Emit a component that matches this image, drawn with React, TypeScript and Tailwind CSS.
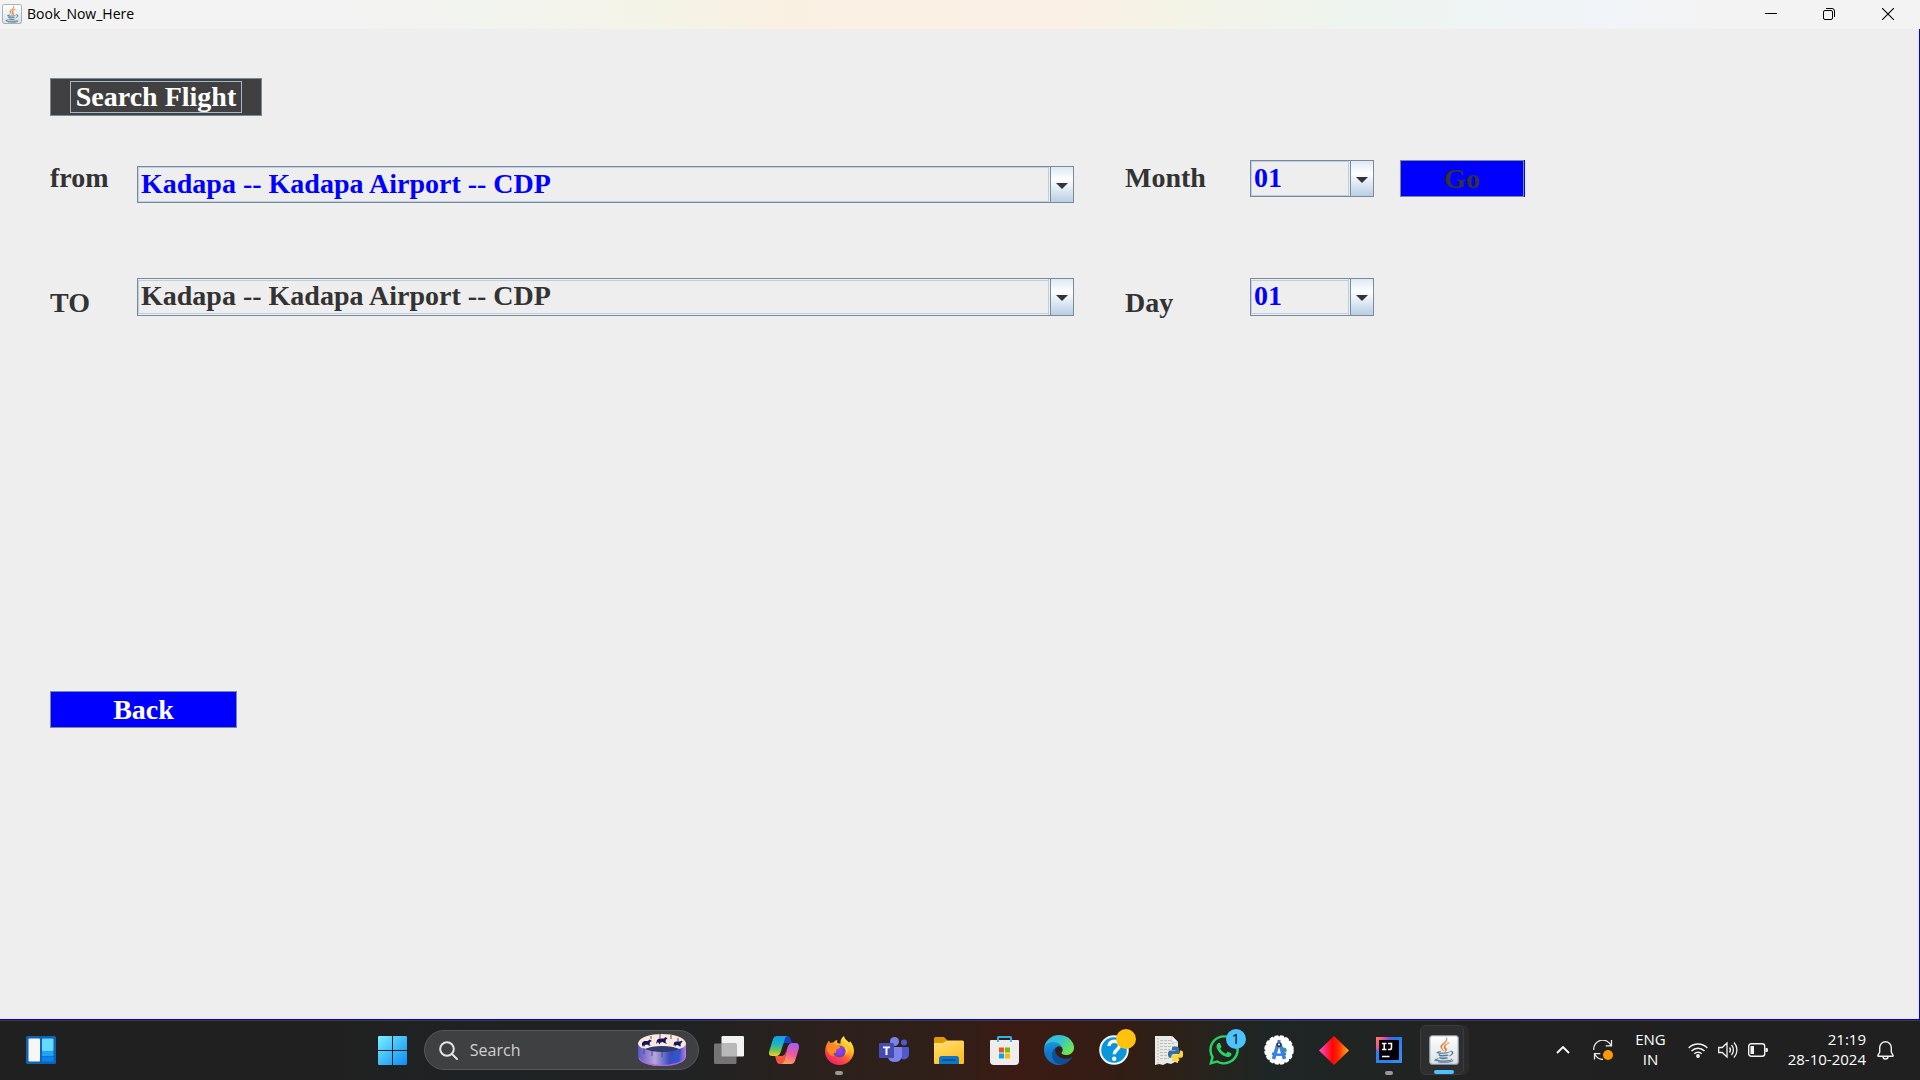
import type { ReactNode } from 'react';
import { FaWhatsapp } from 'react-icons/fa';

const airports = ['Kadapa -- Kadapa Airport -- CDP'];
const months = Array.from({ length: 12 }, (_, i) => String(i + 1).padStart(2, '0'));
const days = Array.from({ length: 31 }, (_, i) => String(i + 1).padStart(2, '0'));

function JavaIcon({ className }: { className: string }) {
  return (
    <svg viewBox="0 0 30 30" className={className} aria-hidden="true">
      <defs>
        <linearGradient id="javaTile" x1="0" y1="0" x2="0" y2="1">
          <stop offset="0" stopColor="#ffffff" />
          <stop offset="1" stopColor="#dcdfe2" />
        </linearGradient>
      </defs>
      <rect x="0.75" y="0.75" width="28.5" height="28.5" rx="2.5" fill="url(#javaTile)" stroke="#8ba3b5" strokeWidth="1.2" />
      <g transform="translate(5.5 2.5) scale(0.049)">
        <path
          fill="#e8762d"
          stroke="#e8762d"
          strokeWidth="8"
          d="M192.34 280.8c-19-42.7-83.1-80.2 0-145.8C296 53.2 242.84 0 242.84 0c21.5 84.5-75.6 110.1-110.7 162.6-23.9 35.9 11.7 74.4 60.2 118.2zM306.94 104.6c.1 0-175.2 43.8-91.5 140.2 24.7 28.4-6.5 54-6.5 54s62.7-32.4 33.9-72.9c-26.9-37.8-47.5-56.6 64.1-121.3z"
        />
        <path
          fill="#4c7896"
          stroke="#4c7896"
          strokeWidth="10"
          d="M277.74 312.9c9.8-6.7 23.4-12.5 23.4-12.5s-38.7 7-77.2 10.2c-47.1 3.9-97.7 4.7-123.1 1.3-60.1-8 33-30.1 33-30.1s-36.1-2.4-80.6 19c-52.5 25.4 130 37 224.5 12.1zM300.84 375.1a12.19 12.19 0 0 1-2 2.6c128.3-33.7 81.1-118.9 19.8-97.3a17.33 17.33 0 0 0-8.2 6.3 70.45 70.45 0 0 1 11-3c31-6.5 75.5 41.5-20.6 91.4zM348 437.4s14.5 11.9-15.9 21.2c-57.9 17.5-240.8 22.8-291.6.7-18.3-7.9 16-19 26.8-21.3 11.2-2.4 17.7-2 17.7-2-20.3-14.3-131.3 28.1-56.4 40.2C232.84 509.4 401 461.3 348 437.4zM124.44 396c-78.7 22 47.9 67.4 148.1 24.5a185.89 185.89 0 0 1-28.2-13.8c-44.7 8.5-65.4 9.1-106 4.5-33.5-3.8-13.9-15.2-13.9-15.2zm179.8 97.2c-78.7 14.8-175.8 13.1-233.3 3.6 0-.1 11.8 9.7 72.4 13.6 92.2 5.9 233.8-3.3 237.1-46.9 0 0-6.4 16.5-76.2 29.7zM260.64 353c-59.2 11.4-93.5 11.1-136.8 6.6-33.5-3.5-11.6-19.7-11.6-19.7-86.8 28.8 48.2 61.4 169.5 25.9a60.37 60.37 0 0 1-21.1-12.8z"
        />
      </g>
    </svg>
  );
}

function TitleBar() {
  return (
    <header className="flex h-[29px] items-center bg-[linear-gradient(90deg,#f3f3f3_0%,#f3f3f3_17%,#f2f4ef_25%,#f4f3e6_35%,#faf0e2_41%,#faf0e6_56%,#f4f3e6_61%,#eef4ee_70%,#eff4f4_76%,#f1f4f8_84%,#f3f3f3_90%)] pb-px pl-0.5">
      <JavaIcon className="size-5" />
      <h1 className="ml-[5px] flex-1 font-['Open_Sans',sans-serif] text-sm text-black">Book_Now_Here</h1>
      <div className="flex h-full">
        <button type="button" aria-label="Minimize" className="flex w-[58px] items-center justify-center">
          <svg viewBox="0 0 12 12" className="size-3" stroke="#000" fill="none">
            <path d="M0 5.5h12" />
          </svg>
        </button>
        <button type="button" aria-label="Restore" className="flex w-[58px] items-center justify-center">
          <svg viewBox="0 0 12 12" className="size-3" stroke="#000" fill="none">
            <rect x="0.5" y="2.5" width="9" height="9" rx="1.5" />
            <path d="M3 .5h6a2.5 2.5 0 0 1 2.5 2.5v6" />
          </svg>
        </button>
        <button type="button" aria-label="Close" className="flex w-[62px] items-center justify-center pr-0.5">
          <svg viewBox="0 0 12 12" className="size-3" stroke="#000" fill="none" strokeWidth="1.1">
            <path d="M0 0l12 12M12 0L0 12" />
          </svg>
        </button>
      </div>
    </header>
  );
}

type ComboProps = { id: string; options: string[]; tone: string; frame: string };

function Combo({ id, options, tone, frame }: ComboProps) {
  return (
    <div className={`relative flex border border-[#7a8a99] ${frame}`}>
      <select
        id={id}
        className={`min-w-0 flex-1 appearance-none border border-[#b8cfe5] bg-transparent pr-8 pb-0.5 pl-0.5 leading-[30px] outline-none ${tone}`}
      >
        {options.map((o) => (
          <option key={o}>{o}</option>
        ))}
      </select>
      <span className="pointer-events-none absolute inset-y-0 right-0 flex w-[23px] items-center justify-center border-l border-[#7a8a99] bg-[linear-gradient(180deg,#dde8f3_0%,#ffffff_35%,#b8cfe5_100%)] shadow-[-1px_0_0_#eeeeee,-2px_0_0_#b8cfe5]">
        <svg viewBox="0 0 12 6" className="mt-0.5 h-1.5 w-3" fill="#333">
          <path d="M0 0h12L6 6z" />
        </svg>
      </span>
    </div>
  );
}

function BookingForm() {
  return (
    <main className="flex-1 border-r border-b border-[#0000e0] bg-[#eeeeee] pt-[49px] pl-[50px] font-['Liberation_Serif',serif] text-[28px] leading-[30px] font-bold text-[#333333]">
      <button type="button" className="flex h-[38px] w-[212px] items-center justify-center border border-[#7a8a99] bg-[#404040] text-white">
        <span className="w-[172px] border border-[#a3b8cc]">Search Flight</span>
      </button>

      <div className="mt-11 grid grid-cols-[87px_937fr_176px_124px_26px_125px_394fr] items-start">
        <label htmlFor="from" className="mt-[3px]">from</label>
        <div className="mt-1.5 grid">
          <Combo id="from" options={airports} tone="text-[#0000ff]" frame="h-[37px]" />
        </div>
        <label htmlFor="month" className="mt-[3px] pl-[51px]">Month</label>
        <Combo id="month" options={months} tone="text-[#0000ff]" frame="h-[37px]" />
        <span />
        <button type="button" className="mr-px h-[37px] border border-[#7a8a99] bg-[#0000ff] shadow-[1px_0_0_#0000ff]">
          Go
        </button>
      </div>

      <div className="mt-[75px] grid grid-cols-[87px_937fr_176px_124px_26px_125px_394fr] items-start">
        <label htmlFor="to" className="mt-2.5">TO</label>
        <Combo id="to" options={airports} tone="text-[#333333]" frame="h-[38px] py-px" />
        <label htmlFor="day" className="mt-2.5 pl-[51px]">Day</label>
        <Combo id="day" options={days} tone="text-[#0000ff]" frame="h-[38px] py-px" />
      </div>

      <button type="button" className="mt-[373px] block h-[37px] w-[187px] border border-[#7a8a99] bg-[#0000ff] text-white">
        Back
      </button>
    </main>
  );
}

function WidgetsIcon() {
  return (
    <svg viewBox="0 0 30 28" className="h-7 w-[30px]">
      <rect width="30" height="28" rx="1.5" fill="#0f62b4" />
      <rect x="2.5" y="2.5" width="11.5" height="23" rx="1" fill="#f6f6f6" />
      <rect x="16" y="2.5" width="11.5" height="12.5" rx="1" fill="#66d9ff" />
      <rect x="16" y="15" width="11.5" height="5" fill="#21a3f5" />
      <rect x="16" y="20.5" width="11.5" height="5" fill="#0a84f0" />
    </svg>
  );
}

function StartIcon() {
  return (
    <svg viewBox="0 0 29 29" className="size-[29px]">
      <defs>
        <linearGradient id="win" x1="0" y1="0" x2="29" y2="29" gradientUnits="userSpaceOnUse">
          <stop offset="0" stopColor="#7af2ff" />
          <stop offset="0.5" stopColor="#3fbcf8" />
          <stop offset="1" stopColor="#0e8df5" />
        </linearGradient>
      </defs>
      <path fill="url(#win)" d="M0 1q0-1 1-1h13v14H0zM15 0h13q1 0 1 1v13H15zM0 15h14v14H1q-1 0-1-1zM15 15h14v13q0 1-1 1H15z" />
    </svg>
  );
}

function CarouselArt() {
  return (
    <svg viewBox="0 0 48 32" className="h-8 w-12">
      <defs>
        <linearGradient id="car" x1="0" y1="0" x2="1" y2="0">
          <stop offset="0" stopColor="#5a55c8" />
          <stop offset="0.35" stopColor="#b7a6d8" />
          <stop offset="0.65" stopColor="#3a4fc0" />
          <stop offset="0.85" stopColor="#2f56cf" />
          <stop offset="1" stopColor="#c07ae0" />
        </linearGradient>
      </defs>
      <path d="M0 9v14c2 12 46 12 48 0V9z" fill="url(#car)" />
      <path d="M1 24c5 10 41 10 46 0" fill="none" stroke="#c05fe0" strokeWidth="1.2" />
      <path d="M0 9C3-3 45-3 48 9c0 3-3 5-7 6-8-3-26-3-34 0-4-1-7-3-7-6z" fill="#fbe8df" />
      <path d="M7 15c8-4 26-4 34 0-8 4-26 4-34 0z" fill="#2c3a6e" />
      <g fill="#15155a">
        <path d="M5 11l-1 2 0-4 2-2h4l1.500-1.500L14 7l-2 1-.5 2.500L13 12l-2-.5-2-1-2 .5-1 2z" />
        <path d="M20 8l-2 2 1-4 2-1.500h5L27.500 3l2 1.500-1.500 1L27.500 8l1.500 2-2.500-1-2-1-2 .5-1 2z" />
        <path d="M37 11l-1.500 1 .5-3.500 2-1h4l2-1 .5 1.500-1.500 1-.5 2 .5 1.500-2-.5-1.500-1-2 .5-.5 1.500z" />
      </g>
      <path d="M6 14v6M14 17v5M24 18v5M34 17v5M42 15v5M13 2v3M22 0v4M33 1v4M40 4v4" stroke="#474468" strokeWidth=".9" />
    </svg>
  );
}

function TaskViewIcon() {
  return (
    <svg viewBox="0 0 30 28" className="h-7 w-[30px]">
      <rect x="7.5" y="0" width="22.5" height="20.5" rx="1.2" fill="#f2f2f2" />
      <rect x="0" y="7.5" width="22.5" height="20.5" rx="1.2" fill="#747474" />
      <path d="M7.5 7.5h15v13h-15z" fill="#b9b9b9" />
    </svg>
  );
}

function CopilotIcon() {
  return (
    <svg viewBox="0 0 30 28" className="h-7 w-[30px]">
      <defs>
        <linearGradient id="cpA" x1="0" y1="0" x2="0" y2="1">
          <stop offset="0" stopColor="#1799e8" />
          <stop offset="0.4" stopColor="#18b4c8" />
          <stop offset="0.7" stopColor="#6cc35a" />
          <stop offset="1" stopColor="#f5d020" />
        </linearGradient>
        <linearGradient id="cpB" x1="0.6" y1="0" x2="0.3" y2="1">
          <stop offset="0" stopColor="#a45df0" />
          <stop offset="0.5" stopColor="#ee5a9c" />
          <stop offset="1" stopColor="#ffa455" />
        </linearGradient>
      </defs>
      <path d="M15 0h3c2 0 3 1 3.500 3L23 7h-6c-3 0-4 2-5 5z" fill="#1442c8" />
      <path d="M15 28h-4c-2 0-3-1-3.500-3L6 20h6c3 0 4-2 5-5z" fill="#f4553b" />
      <path d="M8 0h11c-2 0-3 2-3.500 4L12 15c-1 3-2 5-5 5H3c-3 0-3.500-2-2.700-5L4 3c.7-2 2-3 4-3z" fill="url(#cpA)" />
      <path d="M22 28H12c2 0 3-2 3.500-4L18 13c1-3 2-6 5-6h4c3 0 3.500 3 2.700 6L26 25c-.7 2-2 3-4 3z" fill="url(#cpB)" />
    </svg>
  );
}

function FirefoxIcon() {
  return (
    <svg viewBox="0 0 29 29" className="size-[29px]">
      <defs>
        <linearGradient id="ffA" x1="0.8" y1="0.05" x2="0.2" y2="0.95">
          <stop offset="0" stopColor="#fff14f" />
          <stop offset="0.35" stopColor="#ffb31f" />
          <stop offset="0.6" stopColor="#ff5b36" />
          <stop offset="1" stopColor="#ef1a70" />
        </linearGradient>
        <radialGradient id="ffB" cx="0.5" cy="0.4" r="0.6">
          <stop offset="0" stopColor="#a43cf0" />
          <stop offset="1" stopColor="#5a44d0" />
        </radialGradient>
      </defs>
      <path d="M19 0c.5 3 2.500 4 5 6.500 1-.5 1-1 1-1.500 3 3.500 4 7 4 10.500C28.500 23 22.500 29 14.500 29S0 23 0 15c0-4 1.500-7 4-10.500l1 2.500c1-.7 2-.7 3.500-.5C9.500 5 11 4 12.500 4c-.7 1-.7 2 0 3 1 .5 2 .5 3 .5C15 4 17 1.500 19 0z" fill="url(#ffA)" />
      <circle cx="14.500" cy="15.500" r="6" fill="url(#ffB)" />
      <path d="M2 9c4 0 6-1 9 0 2 1 4 1 4.500 2-.5 1.500-3 1.500-4 2.500-.6 1 0 3-1 3.500-2-1-3 1-1.500 3.500C3 19 1 14 2 9z" fill="#ff8a1e" />
      <path d="M17 9c4 2 5 6 3 9.500 2.500-.5 3.500-3 3.500-5C22.500 11 20 9 17 9z" fill="#ffca30" />
    </svg>
  );
}

function TeamsIcon() {
  return (
    <svg viewBox="0 0 30 27" className="h-[27px] w-[30px]">
      <circle cx="25" cy="5.500" r="3" fill="#5059c9" />
      <path d="M20 10h9q1 0 1 1v6.500a5 5 0 0 1-10 0z" fill="#5059c9" />
      <circle cx="15.500" cy="4.500" r="4.500" fill="#7b83eb" />
      <path d="M9 10h13q1 0 1 1v8.500a7.500 7.500 0 0 1-14.500 0z" fill="#7b83eb" />
      <rect x="0" y="6" width="15" height="15" rx="1.300" fill="#454db4" />
      <path d="M4 9.500h7v1.800H8.500V18H6.500v-6.700H4z" fill="#fff" />
    </svg>
  );
}

function ExplorerIcon() {
  return (
    <svg viewBox="0 0 30 27" className="h-[27px] w-[30px]">
      <defs>
        <linearGradient id="fold" x1="0" y1="0" x2="0.6" y2="1">
          <stop offset="0" stopColor="#ffe07a" />
          <stop offset="1" stopColor="#ffbf20" />
        </linearGradient>
      </defs>
      <path d="M0 1.500Q0 0 1.500 0H10l3 3v4H0z" fill="#dd9a06" />
      <path d="M0 6h9l4-2.500h15.500Q30 3.500 30 5v21q0 1-1 1H1q-1 0-1-1z" fill="url(#fold)" />
      <path d="M5 27v-5.500Q5 19 7.500 19h15q2.500 0 2.500 2.500V27z" fill="#0f76c4" />
      <path d="M8.500 23h13" stroke="#06437e" strokeWidth="1.200" />
    </svg>
  );
}

function StoreIcon() {
  return (
    <svg viewBox="0 0 29 29" className="size-[29px]">
      <path d="M8 5V2q0-1 1-1h11q1 0 1 1v3" fill="none" stroke="#2fb4e6" strokeWidth="1.800" />
      <path d="M0 5q0-1 1-1h27q1 0 1 1v20q0 4-4 4H4q-4 0-4-4z" fill="#ededed" />
      <path d="M9 11.500h5v5H9z" fill="#f25022" />
      <path d="M15 11.500h5v5h-5z" fill="#7fba00" />
      <path d="M9 17.500h5v5H9z" fill="#00a4ef" />
      <path d="M15 17.500h5v5h-5z" fill="#ffb900" />
      <path d="M8 4V2q0-1 1-1h11q1 0 1 1v4M8 4v2" fill="none" stroke="#2fb4e6" strokeWidth="1.800" />
    </svg>
  );
}

function EdgeIcon() {
  return (
    <svg viewBox="0 0 256 256" className="size-[30px]">
      <defs>
        <linearGradient id="edA" x1="0" y1="0" x2="1" y2="0.6">
          <stop offset="0" stopColor="#31b6e8" />
          <stop offset="0.5" stopColor="#35c1d4" />
          <stop offset="1" stopColor="#6fe84f" />
        </linearGradient>
        <linearGradient id="edB" x1="0.3" y1="0" x2="0.4" y2="1">
          <stop offset="0" stopColor="#1b9de2" />
          <stop offset="0.5" stopColor="#1276c8" />
          <stop offset="1" stopColor="#1470c0" />
        </linearGradient>
      </defs>
      <path fill="#0c4f96" d="M231 190.500c-3.400 1.800-6.900 3.400-10.500 4.700a101 101 0 0 1-35.900 6.500c-47.300 0-88.500-32.500-88.500-74.300 0-11.500 6.400-21.900 16.400-27.300-42.800 1.800-53.800 46.400-53.800 72.500 0 74 68.100 81.400 82.800 81.400 7.900 0 19.800-2.300 27-4.600l1.300-.4a128.300 128.300 0 0 0 66.600-52.800 4 4 0 0 0-5.400-5.700z" />
      <path fill="url(#edB)" d="M105.700 241.400a79.200 79.200 0 0 1-22.700-21.300 80.700 80.700 0 0 1 29.500-120c3.200-1.400 8.400-4.100 15.500-4a32.400 32.400 0 0 1 25.700 13 31.900 31.900 0 0 1 6.300 18.700c0-.2 24.500-79.600-80-79.600-43.900 0-80 41.600-80 78.200 0 19.100 4 38.100 12.200 55.500a128 128 0 0 0 156.400 67 75.500 75.500 0 0 1-62.800-7.900z" />
      <path fill="url(#edA)" d="M152.300 148.900c-.9 1-3.400 2.500-3.400 5.600 0 2.600 1.700 5.200 4.800 7.300 14.300 10 41.400 8.600 41.500 8.600 10.700 0 21.100-2.900 30.300-8.300A61.400 61.400 0 0 0 256 109c.3-22.400-8-37.300-11.300-43.900C223.500 23.900 177.700 0 128 0A128 128 0 0 0 0 126.200c.5-36.500 36.800-66 80-66 3.500 0 23.500.3 42 10.100 16.300 8.600 24.900 18.900 30.800 29.200 6.200 10.700 7.300 24.100 7.300 29.500s-2.700 13.300-7.800 19.900z" />
    </svg>
  );
}

function HelpIcon() {
  return (
    <svg viewBox="0 0 30 30" className="size-[30px]">
      <circle cx="15" cy="15" r="13.800" fill="#0b96dc" stroke="#f2f8fb" strokeWidth="2" />
      <path d="M10 11c0-3 2.300-4.700 5.300-4.700s5.200 1.700 5.200 4.500c0 3.700-5.300 4-5.300 8.400" fill="none" stroke="#fff" strokeWidth="3.400" />
      <circle cx="15.200" cy="23.800" r="2.200" fill="#fff" />
    </svg>
  );
}

function PythonFileIcon() {
  return (
    <svg viewBox="0 0 28 29" className="h-[29px] w-7">
      <path d="M0 0h17l6 6v21l-3-1-4 2-4-1-4 2-4-1-4 1z" fill="#e9e9e6" />
      <path d="M3 2v26" stroke="#b5b5b5" strokeDasharray="1.500 1.500" />
      <path d="M5 4.500h11M5 7.500h14M5 10.500h15M5 13.500h10M5 16.500h9M5 19.500h9M5 22.500h9" stroke="#b9b9b9" strokeWidth=".9" strokeDasharray="3 1" />
      <path d="M17 0v6h6z" fill="#fff" stroke="#aaa" strokeWidth=".5" />
      <g transform="translate(13 9.500) scale(0.034)">
        <path fill="#ffd43b" d="M439.800 200.500c-7.700-30.900-22.300-54.200-53.400-54.200h-40.100v47.400c0 36.800-31.200 67.800-66.800 67.800H172.700c-29.200 0-53.400 25-53.400 54.300v101.800c0 29 25.200 46 53.400 54.300 33.800 9.900 66.300 11.700 106.800 0 26.900-7.800 53.400-23.500 53.400-54.300v-40.700H226.200v-13.600h160.200c31.100 0 42.600-21.700 53.400-54.200 11.200-33.500 10.700-65.700 0-108.600z" />
        <path fill="#3470a4" d="M167.800 248.100h106.800c29.700 0 53.400-24.500 53.400-54.300V91.900c0-29-24.400-50.700-53.400-55.600-35.800-5.900-74.700-5.600-106.800.1-45.200 8-53.400 24.700-53.400 55.600v40.700h106.900v13.600h-147c-31.100 0-58.300 18.700-66.800 54.200-9.800 40.700-10.200 66.100 0 108.600 7.600 31.600 25.700 54.200 56.800 54.200H101v-48.800c0-35.300 30.500-66.400 66.800-66.400z" />
      </g>
    </svg>
  );
}

function AndroidStudioIcon() {
  return (
    <svg viewBox="0 0 30 30" className="size-[30px]">
      <circle cx="15" cy="15" r="13.800" fill="#fff" />
      <circle cx="15" cy="15" r="13.900" fill="none" stroke="#fff" strokeWidth="1.800" strokeDasharray="4 1.500" />
      <path d="M17 12l5 1 1 3-3 2z" fill="#34a06a" />
      <path d="M8 18.500q7 2.500 14 0" fill="none" stroke="#3b7fe8" strokeWidth="2.400" />
      <path d="M14 9L9.500 24M16 9l4.500 15" fill="none" stroke="#3b7fe8" strokeWidth="3.600" />
      <circle cx="15" cy="9.500" r="1.800" fill="#fff" stroke="#333" strokeWidth="1.500" />
      <path d="M15 5v2.500" stroke="#3b7fe8" strokeWidth="3" />
    </svg>
  );
}

function DiamondIcon() {
  return (
    <svg viewBox="0 0 30 29" className="h-[29px] w-[30px]">
      <defs>
        <linearGradient id="dia" x1="0" y1="0" x2="1" y2="0">
          <stop offset="0" stopColor="#ff4fd0" />
          <stop offset="0.45" stopColor="#ff0505" />
          <stop offset="0.65" stopColor="#ff2a00" />
          <stop offset="1" stopColor="#ffb020" />
        </linearGradient>
      </defs>
      <path d="M15 0l15 14.500L15 29 0 14.500z" fill="url(#dia)" />
    </svg>
  );
}

function IntelliJIcon() {
  return (
    <svg viewBox="0 0 26 26" className="size-[26px]">
      <defs>
        <linearGradient id="ij" x1="0" y1="0" x2="1" y2="0.6">
          <stop offset="0" stopColor="#ff8a3c" />
          <stop offset="0.22" stopColor="#f0509a" />
          <stop offset="0.42" stopColor="#6a55e0" />
          <stop offset="0.6" stopColor="#1b7af0" />
          <stop offset="1" stopColor="#2f8ef5" />
        </linearGradient>
      </defs>
      <rect width="26" height="26" fill="url(#ij)" />
      <path d="M0 12v14h14z" fill="#2a84ee" />
      <rect x="3" y="3" width="20" height="20" fill="#050008" />
      <path d="M6 6.500h4.500M6 12.500h4.500M8.200 6.500v6M12 6.500h3.500v4.300q0 1.800-2 1.800H12" fill="none" stroke="#fff" strokeWidth="1.500" />
      <path d="M6 19.500h7.500" stroke="#fff" strokeWidth="1.500" />
    </svg>
  );
}

type AppItem = { name: string; icon: ReactNode; mark?: string; badge?: ReactNode };

const apps: AppItem[] = [
  { name: 'Task View', icon: <TaskViewIcon /> },
  { name: 'Copilot', icon: <CopilotIcon /> },
  { name: 'Firefox', icon: <FirefoxIcon />, mark: 'w-2 bg-[#9a9797]' },
  { name: 'Teams', icon: <TeamsIcon /> },
  { name: 'File Explorer', icon: <ExplorerIcon /> },
  { name: 'Store', icon: <StoreIcon /> },
  { name: 'Edge', icon: <EdgeIcon /> },
  {
    name: 'Get Help',
    icon: <HelpIcon />,
    badge: <span className="absolute top-1 right-1.5 size-5 rounded-full bg-[#ffc20e]" />,
  },
  { name: 'Python', icon: <PythonFileIcon /> },
  {
    name: 'WhatsApp',
    icon: <FaWhatsapp className="size-[34px] text-[#25d366]" />,
    badge: (
      <span className="absolute top-1 right-1.5 flex size-5 items-center justify-center rounded-full bg-[#4cc2ff] text-sm text-black">
        1
      </span>
    ),
  },
  { name: 'Android Studio', icon: <AndroidStudioIcon /> },
  { name: 'Diamond', icon: <DiamondIcon /> },
  { name: 'IntelliJ IDEA', icon: <IntelliJIcon />, mark: 'w-2 bg-[#9a9797]' },
];

function Taskbar() {
  return (
    <footer className="flex h-[60px] items-center border-t border-[#3c3c3c] bg-[linear-gradient(90deg,#202020_0%,#202020_17%,#1f2224_24%,#202223_36%,#2b211c_42%,#301f19_49%,#3b1b14_53%,#331d14_58%,#2c2117_61%,#1e2625_66%,#202423_71%,#222222_76%,#202020_84%)] pb-px font-['Open_Sans',sans-serif] text-[15px] leading-5 text-white">
      <div className="w-[19%] pl-[26px]">
        <button type="button" aria-label="Widgets" className="block">
          <WidgetsIcon />
        </button>
      </div>
      <button type="button" aria-label="Start" className="flex w-[55px] items-center justify-center">
        <StartIcon />
      </button>
      <div className="ml-1 flex h-10 w-[275px] items-center rounded-full border border-[#55585a] bg-[#3e4042] pr-3 pl-3.5">
        <svg viewBox="0 0 19 19" className="size-[19px] shrink-0" fill="none" stroke="#e4e4e4" strokeWidth="2" strokeLinecap="round">
          <circle cx="8" cy="8" r="6.800" />
          <path d="M13 13l5 5" />
        </svg>
        <input
          type="text"
          aria-label="Search"
          placeholder="Search"
          className="ml-3 min-w-0 flex-1 bg-transparent text-base text-white outline-none placeholder:text-[#d0d0d0]"
        />
        <CarouselArt />
      </div>
      <nav className="ml-[3px] flex" aria-label="Apps">
        {apps.map((app) => (
          <button
            type="button"
            key={app.name}
            aria-label={app.name}
            className="relative flex h-[50px] w-[55px] items-center justify-center"
          >
            {app.icon}
            {app.badge}
            {app.mark && <span className={`absolute bottom-0 h-1 rounded-full ${app.mark}`} />}
          </button>
        ))}
        <button
          type="button"
          aria-label="Book_Now_Here"
          className="relative ml-[3px] flex h-[50px] w-11 items-center justify-center rounded-md border border-[#3c3c3c] bg-[#2e2e2e] pl-1 shadow-[5px_0_0_#2b2b2b]"
        >
          <JavaIcon className="size-[30px]" />
          <span className="absolute bottom-0 h-1 w-5 rounded-full bg-[#4cc2ff]" />
        </button>
      </nav>
      <div className="ml-auto flex items-center pr-[26px]">
        <button type="button" aria-label="Show hidden icons">
          <svg viewBox="0 0 14 8" className="h-2 w-3.5" fill="none" stroke="#fff" strokeWidth="1.800">
            <path d="M1 7l6-6 6 6" />
          </svg>
        </button>
        <button type="button" aria-label="Update" className="ml-[23px]">
          <svg viewBox="0 0 20 20" className="size-5" fill="none" stroke="#e8e8e8" strokeWidth="1.300">
            <path d="M.8 10A9 9 0 0 1 18 5.500M18.500 0v5.800h-5.800M1.500 19.500v-5.800h5.800M2 14.500a9.500 9.500 0 0 0 8 5" />
            <circle cx="15" cy="15" r="5" fill="#ff9800" stroke="none" />
          </svg>
        </button>
        <button type="button" className="ml-[22px] pb-0.5 text-center">
          ENG
          <br />
          IN
        </button>
        <button type="button" aria-label="Network, volume and battery" className="ml-[22px] flex items-center gap-2.5">
          <svg viewBox="0 0 20 16" className="h-4 w-5" fill="none" stroke="#f2f2f2" strokeWidth="1.500">
            <path d="M.7 6A13 13 0 0 1 19.300 6M3.500 9a9 9 0 0 1 13 0M6.300 11.800a5.200 5.200 0 0 1 7.400 0" />
            <circle cx="10" cy="14" r="1.900" fill="#f2f2f2" stroke="none" />
          </svg>
          <svg viewBox="0 0 20 18" className="h-[18px] w-5" fill="none" stroke="#f2f2f2" strokeWidth="1.300">
            <path d="M.7 6.500h3.500L9 2v14l-4.800-4.500H.7zM11.500 6.500a4 4 0 0 1 0 5M13.500 4a7.500 7.500 0 0 1 0 10M16 1.500a11 11 0 0 1 0 15" />
          </svg>
          <svg viewBox="0 0 20 14" className="h-3.5 w-5" fill="none" stroke="#f2f2f2" strokeWidth="1.400">
            <rect x="0.700" y="0.700" width="16" height="12.600" rx="2.500" />
            <path d="M2.500 3h3.500v8H2.500z" fill="#f2f2f2" stroke="none" />
            <path d="M17.500 5h1.500q1 0 1 2t-1 2h-1.500z" fill="#f2f2f2" stroke="none" />
          </svg>
        </button>
        <button type="button" className="ml-5 pb-0.5 text-right">
          21:19
          <br />
          28-10-2024
        </button>
        <button type="button" aria-label="Notifications" className="ml-[11px]">
          <svg viewBox="0 0 17 19" className="h-[19px] w-[17px]" fill="none" stroke="#f2f2f2" strokeWidth="1.400">
            <path d="M8.500.8a5.800 5.800 0 0 0-5.800 5.800v4.500L.9 14.500q-.3.800.6.800h14q.9 0 .6-.8l-1.800-3.400V6.600A5.800 5.800 0 0 0 8.500.8zM6 15.500a2.500 2.500 0 0 0 5 0" />
          </svg>
        </button>
      </div>
    </footer>
  );
}

export default function App() {
  return (
    <div className="flex min-h-screen flex-col">
      <TitleBar />
      <BookingForm />
      <Taskbar />
    </div>
  );
}
